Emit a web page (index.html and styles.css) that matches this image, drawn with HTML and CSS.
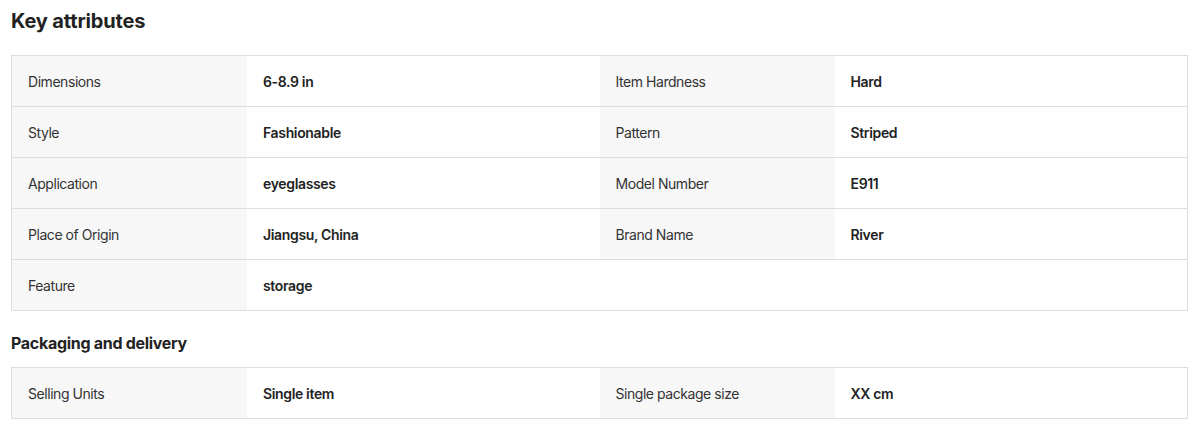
FILE: index.html
```html
<!DOCTYPE html>
<html>
<head>
<meta charset="utf-8">
<link rel="stylesheet" href="styles.css">
</head>
<body>
<div class="page">
  <h2 class="title">Key attributes</h2>
  <div class="attr-table">
    <div class="row">
      <div class="key">Dimensions</div><div class="val">6-8.9 in</div>
      <div class="key">Item Hardness</div><div class="val">Hard</div>
    </div>
    <div class="row">
      <div class="key">Style</div><div class="val">Fashionable</div>
      <div class="key">Pattern</div><div class="val">Striped</div>
    </div>
    <div class="row">
      <div class="key">Application</div><div class="val">eyeglasses</div>
      <div class="key">Model Number</div><div class="val">E911</div>
    </div>
    <div class="row">
      <div class="key">Place of Origin</div><div class="val">Jiangsu, China</div>
      <div class="key">Brand Name</div><div class="val">River</div>
    </div>
    <div class="row">
      <div class="key">Feature</div><div class="val">storage</div>
      <div class="empty"></div><div class="empty"></div>
    </div>
  </div>
  <h3 class="subtitle">Packaging and delivery</h3>
  <div class="attr-table">
    <div class="row">
      <div class="key">Selling Units</div><div class="val">Single item</div>
      <div class="key">Single package size</div><div class="val">XX cm</div>
    </div>
  </div>
</div>
</body>
</html>
```
FILE: styles.css
```css
* { box-sizing: border-box; }
html, body { margin: 0; padding: 0; background: #fff; }
body {
  font-family: Inter, "Noto Sans", "Liberation Sans", sans-serif;
  color: #222;
}
.page {
  padding: 7px 9px 0 11px;
}
.title {
  margin: 0 0 20px;
  font-size: 20px;
  line-height: 28px;
  font-weight: 700;
  letter-spacing: -0.15px;
  color: #222;
}
.subtitle {
  margin: 20px 0 12px;
  font-size: 16px;
  line-height: 24px;
  font-weight: 700;
  letter-spacing: -0.3px;
  color: #222;
}
.attr-table {
  border: 1px solid #ddd;
}
.row {
  display: grid;
  grid-template-columns: 20% 30% 20% 30%;
  height: 51px;
  border-top: 1px solid #ddd;
}
.row:first-child { border-top: none; height: 50px; }
.key, .val, .empty {
  display: flex;
  align-items: center;
  padding-left: 16px;
  font-size: 14px;
}
.key {
  background: #f7f7f7;
  color: #333;
  font-weight: 400;
  letter-spacing: -0.45px;
}
.val {
  background: #fff;
  color: #222;
  font-weight: 600;
  letter-spacing: -0.35px;
}
```
